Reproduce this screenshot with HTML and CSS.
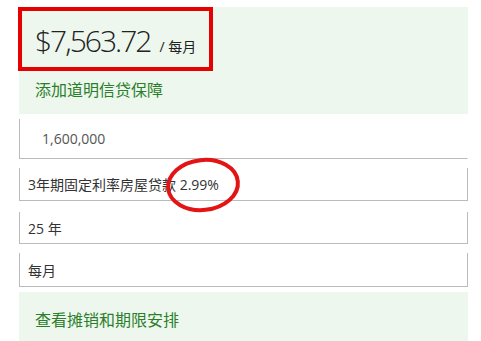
FILE: index.html
```html
<!DOCTYPE html>
<html lang="zh">
<head>
<meta charset="utf-8">
<link rel="stylesheet" href="styles.css">
</head>
<body>
<div class="calc">
  <section class="summary">
    <div class="price">
      <span class="amount">$7,563.72</span>
      <span class="per">/ 每月</span>
    </div>
    <a class="link protect">添加道明信贷保障</a>
    <div class="mark-rect"></div>
  </section>
  <div class="field field-amount"><span class="value muted">1,600,000</span></div>
  <div class="field field-rate"><span class="value">3年期固定利率房屋贷款 2.99%</span>
    <svg class="mark-ellipse" width="84" height="64" viewBox="0 0 84 64">
      <ellipse cx="41" cy="31" rx="35" ry="25" transform="rotate(-6 41 31)" fill="none" stroke="#e41414" stroke-width="4"/>
    </svg>
  </div>
  <div class="field field-term"><span class="value">25 年</span></div>
  <div class="field field-freq"><span class="value">每月</span></div>
  <section class="footer">
    <a class="link">查看摊销和期限安排</a>
  </section>
</div>
</body>
</html>
```
FILE: styles.css
```css
html, body {
  margin: 0;
  padding: 0;
  background: #fff;
}
body {
  font-family: "Open Sans", "Noto Sans CJK SC", sans-serif;
  color: #333;
}
.calc {
  width: 449px;
  margin-left: 19px;
  padding-top: 7px;
  display: flex;
  flex-direction: column;
}
.summary {
  position: relative;
  background: #edf7ee;
  height: 107px;
  padding-left: 16px;
  box-sizing: border-box;
}
.price {
  display: flex;
  align-items: baseline;
  padding-top: 18px;
  height: 47px;
  box-sizing: border-box;
}
.amount {
  font-size: 30px;
  font-weight: 300;
  letter-spacing: -2px;
  color: #222;
  line-height: 31px;
}
.per {
  font-size: 14px;
  margin-left: 9px;
  color: #222;
}
.link {
  display: block;
  color: #2b7f2b;
  font-size: 16px;
  font-family: "Noto Sans CJK SC", sans-serif;
  line-height: 22px;
}
.protect {
  margin-top: 24px;
}
.mark-rect {
  position: absolute;
  left: -1px;
  top: 0;
  width: 195px;
  height: 64px;
  border: 4px solid #e60000;
  box-sizing: border-box;
}
.field {
  position: relative;
  display: flex;
  align-items: center;
  box-sizing: border-box;
  border-left: 1px solid #bbb;
  border-right: 1px solid #bbb;
  border-bottom: 1px solid #bbb;
  padding-left: 8px;
  font-size: 14px;
  font-family: "Open Sans", "Noto Sans CJK SC", sans-serif;
  color: #333;
}
.field-amount {
  margin-top: 5px;
  height: 40px;
  padding-left: 22px;
  border-right-color: transparent;
}
.field-rate {
  margin-top: 9px;
  height: 33px;
}
.field-term {
  margin-top: 11px;
  height: 32px;
}
.field-freq {
  margin-top: 9px;
  height: 34px;
}
.muted {
  color: #555;
}
.mark-ellipse {
  position: absolute;
  left: 142px;
  top: -14px;
}
.footer {
  margin-top: 5px;
  background: #edf7ee;
  height: 60px;
  padding: 16px 0 0 16px;
  box-sizing: border-box;
}
```
